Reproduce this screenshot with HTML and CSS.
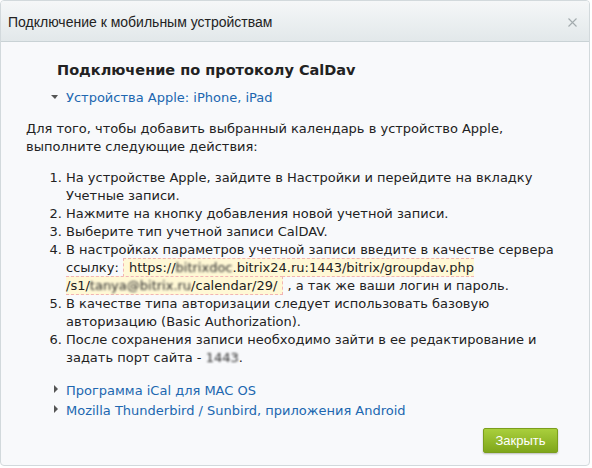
FILE: index.html
```
<!DOCTYPE html>
<html lang="ru">
<head>
<meta charset="utf-8">
<link rel="stylesheet" href="styles.css">
</head>
<body>
<div class="dialog">
  <div class="titlebar">
    <span class="title">Подключение к мобильным устройствам</span>
    <svg class="close" width="9" height="9" viewBox="0 0 9 9"><path d="M0.5 0.5L8.5 8.5M8.5 0.5L0.5 8.5" stroke="#a3abae" stroke-width="1.1" fill="none"/></svg>
  </div>
  <div class="content">
    <h2 class="heading">Подключение по протоколу CalDav</h2>
    <div class="section-link open"><span class="tri-down"></span><a href="#">Устройства Apple: iPhone, iPad</a></div>
    <p class="intro">Для того, чтобы добавить выбранный календарь в устройство Apple, выполните следующие действия:</p>
    <ol class="steps">
      <li>На устройстве Apple, зайдите в Настройки и перейдите на вкладку Учетные записи.</li>
      <li>Нажмите на кнопку добавления новой учетной записи.</li>
      <li>Выберите тип учетной записи CalDAV.</li>
      <li>В настройках параметров учетной записи введите в качестве сервера ссылку: <span class="code">https://<span class="blur">bitrixdoc</span>.bitrix24.ru:1443/bitrix/groupdav.php<wbr>/s1/<span class="blur">tanya@bitrix.ru</span>/calendar/29/</span> , а так же ваши логин и пароль.</li>
      <li>В качестве типа авторизации следует использовать базовую авторизацию (Basic Authorization).</li>
      <li>После сохранения записи необходимо зайти в ее редактирование и задать порт сайта - <span class="blur">1443</span>.</li>
    </ol>
    <div class="section-link first"><span class="tri-right"></span><a href="#">Программа iCal для MAC OS</a></div>
    <div class="section-link"><span class="tri-right"></span><a href="#">Mozilla Thunderbird / Sunbird, приложения Android</a></div>
    <div class="buttons"><button class="btn">Закрыть</button></div>
  </div>
</div>
</body>
</html>
```
FILE: styles.css
```
html, body {
  margin: 0;
  padding: 0;
  background: #ffffff;
}
body {
  font-family: "DejaVu Sans", Verdana, sans-serif;
  font-size: 13px;
  color: #222;
}
.dialog {
  width: 590px;
  height: 466px;
  box-sizing: border-box;
  border: 1px solid #d2d9dc;
  border-radius: 4px;
  background: #f8f9fb;
  overflow: hidden;
  display: flex;
  flex-direction: column;
}
.titlebar {
  height: 40px;
  flex: none;
  border-bottom: 1px solid #c9d2d5;
  background: linear-gradient(#f5f7f8, #e2e8ea);
  display: flex;
  align-items: center;
  justify-content: space-between;
  padding: 0 12px 0 7px;
}
.title {
  font-family: "Liberation Sans", Arial, sans-serif;
  font-size: 14px;
  color: #222;
  padding-top: 1px;
}
.close {
  display: block;
  margin-top: 2px;
}
.content {
  flex: 1;
  padding: 0 22px 0 25px;
  display: flex;
  flex-direction: column;
}
.heading {
  margin: 19px 0 0 31px;
  font-size: 14.5px;
  font-weight: bold;
  line-height: 18px;
  color: #222;
}
.section-link {
  display: flex;
  align-items: center;
  line-height: 18px;
  margin-left: 25px;
  margin-top: 2px;
}
.section-link.open {
  margin-top: 10px;
}
.section-link.first {
  margin-top: 15px;
}
.section-link a {
  color: #2067b0;
  text-decoration: none;
}
.tri-down {
  width: 0;
  height: 0;
  border-left: 4px solid transparent;
  border-right: 3px solid transparent;
  border-top: 4px solid #555;
  margin: 0 8px 3px 0;
}
.tri-right {
  width: 0;
  height: 0;
  border-top: 4px solid transparent;
  border-bottom: 4px solid transparent;
  border-left: 4px solid #555;
  margin: 0 8px 5px 3px;
}
.intro {
  margin: 13px 0 0 0;
  line-height: 18px;
}
.steps {
  margin: 13px 0 0 0;
  padding-left: 40px;
  line-height: 18px;
}
.code {
  background: #fff8d5;
  border: 1px dashed #f2b4b4;
  padding: 1px 5px;
}
.blur {
  filter: blur(1.3px);
  color: #2a2a2a;
}
.buttons {
  display: flex;
  justify-content: flex-end;
  margin-top: 8px;
  padding-right: 9px;
}
.btn {
  font-family: "Liberation Sans", Arial, sans-serif;
  font-size: 13px;
  color: #fff;
  width: 75px;
  height: 25px;
  border: 1px solid #7b9e1c;
  border-radius: 2px;
  background: linear-gradient(#a9cf3c, #7fa61b);
  box-shadow: 0 1px 2px rgba(0,0,0,0.25);
  padding: 0;
}
```
